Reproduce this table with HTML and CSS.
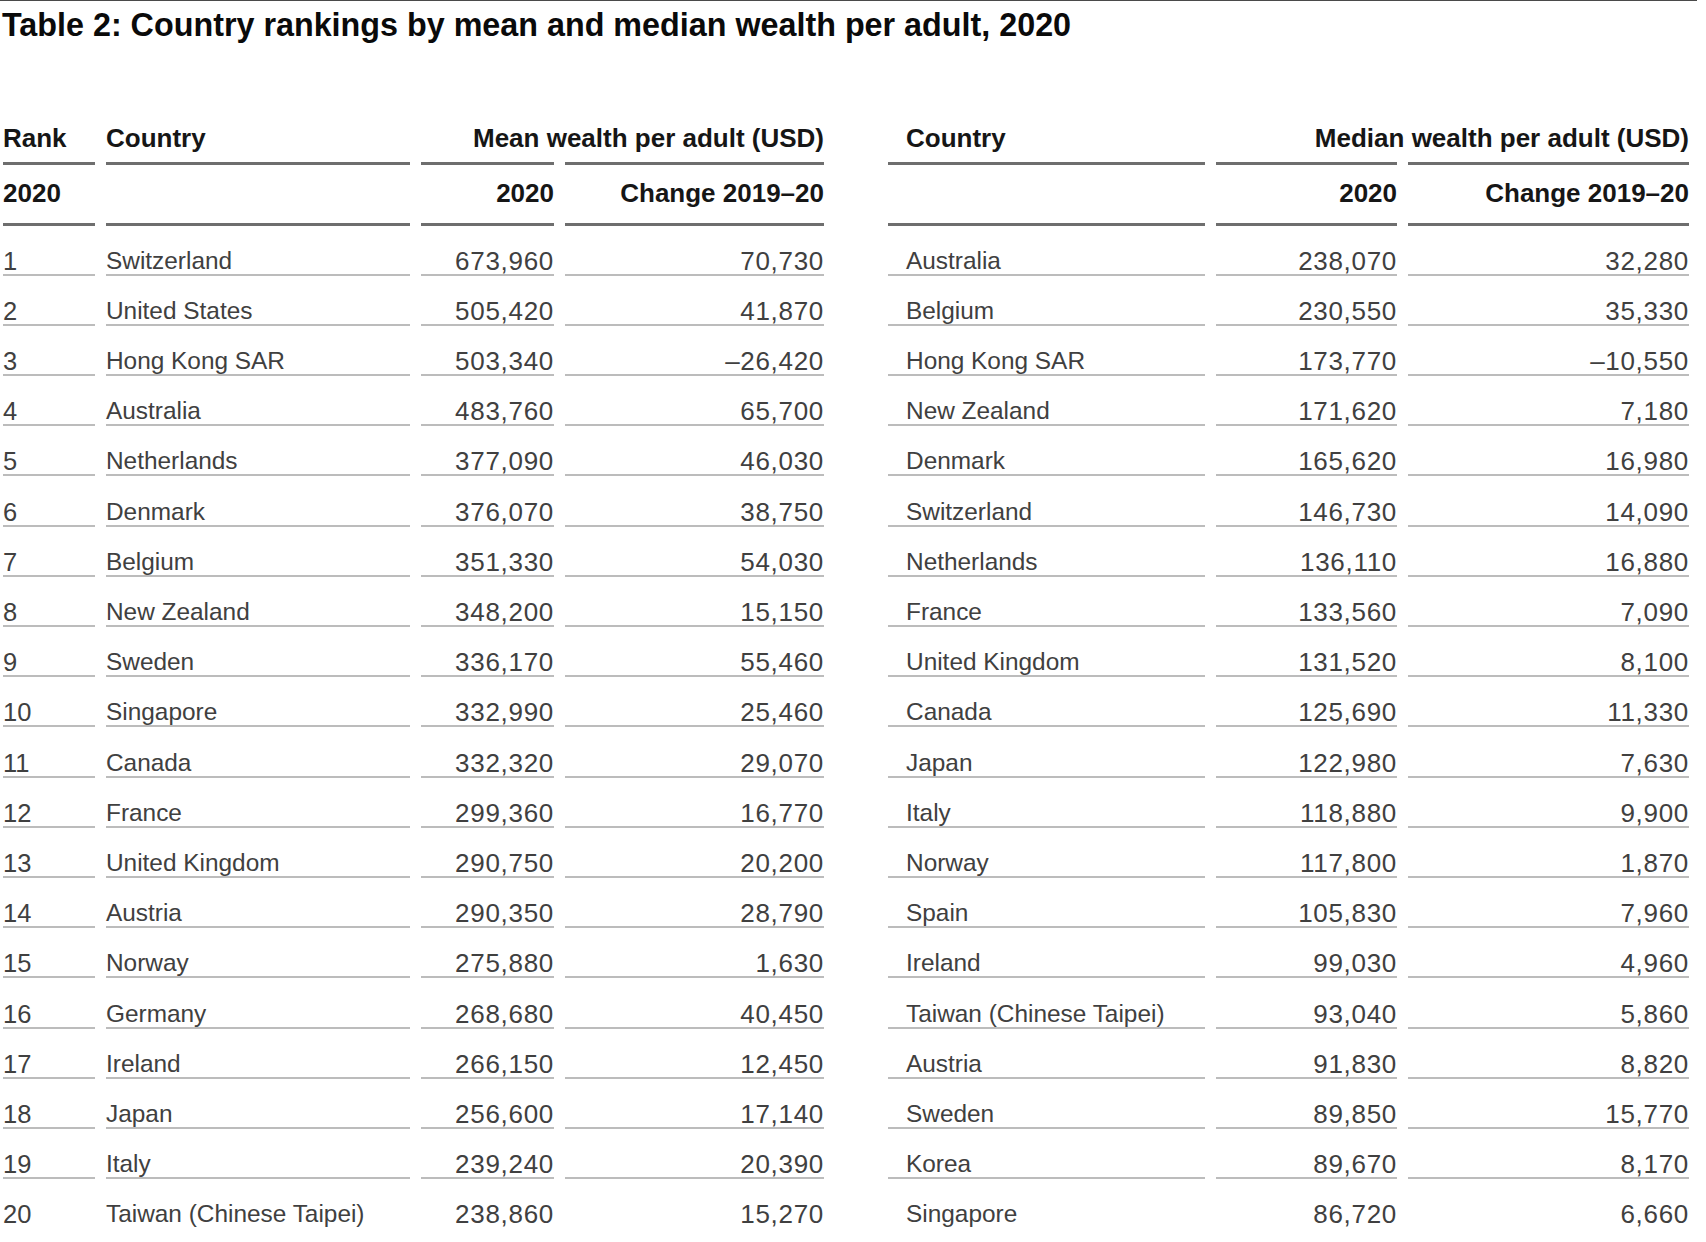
FILE: index.html
```html
<!DOCTYPE html>
<html lang="en">
<head>
<meta charset="utf-8">
<title>Table 2: Country rankings by mean and median wealth per adult, 2020</title>
<link rel="stylesheet" href="styles.css">
</head>
<body>
<div class="page">
  <h1 class="title">Table 2: Country rankings by mean and median wealth per adult, 2020</h1>
  <div class="tables">
    <table class="wt wt-mean">
      <colgroup><col class="c-rank"><col class="c-country"><col class="c-m2020"><col class="c-mchg"></colgroup>
      <thead>
        <tr class="hr1">
          <th class="left">Rank</th>
          <th class="left">Country</th>
          <th class="num span-mean" colspan="2">Mean wealth per adult (USD)</th>
        </tr>
        <tr class="hr2">
          <th class="left">2020</th>
          <th></th>
          <th class="num">2020</th>
          <th class="num">Change 2019–20</th>
        </tr>
      </thead>
      <tbody>
        <tr><td class="rank">1</td><td class="name">Switzerland</td><td class="num">673,960</td><td class="num">70,730</td></tr>
        <tr><td class="rank">2</td><td class="name">United States</td><td class="num">505,420</td><td class="num">41,870</td></tr>
        <tr><td class="rank">3</td><td class="name">Hong Kong SAR</td><td class="num">503,340</td><td class="num">–26,420</td></tr>
        <tr><td class="rank">4</td><td class="name">Australia</td><td class="num">483,760</td><td class="num">65,700</td></tr>
        <tr><td class="rank">5</td><td class="name">Netherlands</td><td class="num">377,090</td><td class="num">46,030</td></tr>
        <tr><td class="rank">6</td><td class="name">Denmark</td><td class="num">376,070</td><td class="num">38,750</td></tr>
        <tr><td class="rank">7</td><td class="name">Belgium</td><td class="num">351,330</td><td class="num">54,030</td></tr>
        <tr><td class="rank">8</td><td class="name">New Zealand</td><td class="num">348,200</td><td class="num">15,150</td></tr>
        <tr><td class="rank">9</td><td class="name">Sweden</td><td class="num">336,170</td><td class="num">55,460</td></tr>
        <tr><td class="rank">10</td><td class="name">Singapore</td><td class="num">332,990</td><td class="num">25,460</td></tr>
        <tr><td class="rank">11</td><td class="name">Canada</td><td class="num">332,320</td><td class="num">29,070</td></tr>
        <tr><td class="rank">12</td><td class="name">France</td><td class="num">299,360</td><td class="num">16,770</td></tr>
        <tr><td class="rank">13</td><td class="name">United Kingdom</td><td class="num">290,750</td><td class="num">20,200</td></tr>
        <tr><td class="rank">14</td><td class="name">Austria</td><td class="num">290,350</td><td class="num">28,790</td></tr>
        <tr><td class="rank">15</td><td class="name">Norway</td><td class="num">275,880</td><td class="num">1,630</td></tr>
        <tr><td class="rank">16</td><td class="name">Germany</td><td class="num">268,680</td><td class="num">40,450</td></tr>
        <tr><td class="rank">17</td><td class="name">Ireland</td><td class="num">266,150</td><td class="num">12,450</td></tr>
        <tr><td class="rank">18</td><td class="name">Japan</td><td class="num">256,600</td><td class="num">17,140</td></tr>
        <tr><td class="rank">19</td><td class="name">Italy</td><td class="num">239,240</td><td class="num">20,390</td></tr>
        <tr><td class="rank">20</td><td class="name">Taiwan (Chinese Taipei)</td><td class="num">238,860</td><td class="num">15,270</td></tr>
      </tbody>
    </table>

    <table class="wt wt-median">
      <colgroup><col class="c-country2"><col class="c-d2020"><col class="c-dchg"></colgroup>
      <thead>
        <tr class="hr1">
          <th class="left indent">Country</th>
          <th class="num span-median" colspan="2">Median wealth per adult (USD)</th>
        </tr>
        <tr class="hr2">
          <th></th>
          <th class="num">2020</th>
          <th class="num">Change 2019–20</th>
        </tr>
      </thead>
      <tbody>
        <tr><td class="name indent">Australia</td><td class="num">238,070</td><td class="num">32,280</td></tr>
        <tr><td class="name indent">Belgium</td><td class="num">230,550</td><td class="num">35,330</td></tr>
        <tr><td class="name indent">Hong Kong SAR</td><td class="num">173,770</td><td class="num">–10,550</td></tr>
        <tr><td class="name indent">New Zealand</td><td class="num">171,620</td><td class="num">7,180</td></tr>
        <tr><td class="name indent">Denmark</td><td class="num">165,620</td><td class="num">16,980</td></tr>
        <tr><td class="name indent">Switzerland</td><td class="num">146,730</td><td class="num">14,090</td></tr>
        <tr><td class="name indent">Netherlands</td><td class="num">136,110</td><td class="num">16,880</td></tr>
        <tr><td class="name indent">France</td><td class="num">133,560</td><td class="num">7,090</td></tr>
        <tr><td class="name indent">United Kingdom</td><td class="num">131,520</td><td class="num">8,100</td></tr>
        <tr><td class="name indent">Canada</td><td class="num">125,690</td><td class="num">11,330</td></tr>
        <tr><td class="name indent">Japan</td><td class="num">122,980</td><td class="num">7,630</td></tr>
        <tr><td class="name indent">Italy</td><td class="num">118,880</td><td class="num">9,900</td></tr>
        <tr><td class="name indent">Norway</td><td class="num">117,800</td><td class="num">1,870</td></tr>
        <tr><td class="name indent">Spain</td><td class="num">105,830</td><td class="num">7,960</td></tr>
        <tr><td class="name indent">Ireland</td><td class="num">99,030</td><td class="num">4,960</td></tr>
        <tr><td class="name indent">Taiwan (Chinese Taipei)</td><td class="num">93,040</td><td class="num">5,860</td></tr>
        <tr><td class="name indent">Austria</td><td class="num">91,830</td><td class="num">8,820</td></tr>
        <tr><td class="name indent">Sweden</td><td class="num">89,850</td><td class="num">15,770</td></tr>
        <tr><td class="name indent">Korea</td><td class="num">89,670</td><td class="num">8,170</td></tr>
        <tr><td class="name indent">Singapore</td><td class="num">86,720</td><td class="num">6,660</td></tr>
      </tbody>
    </table>
  </div>
</div>
</body>
</html>
```

FILE: styles.css
```css
:root {
  --thick: #6e6e6e;
  --thin: #bcbcbc;
  --gap: 11px;
}

html, body {
  margin: 0;
  padding: 0;
  background: #ffffff;
}

body {
  font-family: "Liberation Sans", Arial, Helvetica, sans-serif;
  color: #111;
}

.page {
  width: 1697px;
  border-top: 1px solid #4a4a4a;
}

.title {
  margin: 6px 0 80px 2px;
  font-size: 32.3px;
  line-height: 37px;
  font-weight: 700;
  color: #0a0a0a;
}

.tables {
  display: flex;
  align-items: flex-start;
  gap: 42px;
  margin-left: -8px;
}

.wt {
  border-collapse: separate;
  border-spacing: var(--gap) 0;
  table-layout: fixed;
}

.wt-mean { width: 843px; }
.wt-median { width: 823px; }

.c-rank { width: 92px; }
.c-country { width: 304px; }
.c-m2020 { width: 133px; }
.c-mchg { width: 259px; }

.c-country2 { width: 317px; }
.c-d2020 { width: 181px; }
.c-dchg { width: 281px; }

.wt th,
.wt td {
  padding: 0;
  white-space: nowrap;
  vertical-align: bottom;
  line-height: 26px;
}

.wt th {
  font-size: 26px;
  font-weight: 700;
  color: #161616;
  text-align: left;
}

.wt td {
  font-size: 25.5px;
  font-weight: 400;
  color: #404040;
  padding-top: 22.2px;
  border-bottom: 2px solid var(--thin);
}

.wt td.name {
  font-size: 24.4px;
}

.wt td.num {
  font-size: 26px;
  letter-spacing: 0.7px;
}

.wt td.num {
  padding-right: 0;
}

.wt tbody tr:last-child td {
  border-bottom-color: transparent;
}

.wt .num {
  text-align: right;
}

.wt .left {
  text-align: left;
}

.wt .indent {
  padding-left: 18px;
}

.hr1 th {
  padding-top: 1px;
  padding-bottom: 10.5px;
  border-bottom: 3px solid var(--thick);
}

.hr2 th {
  padding-top: 15.5px;
  padding-bottom: 16.5px;
  border-bottom: 3px solid var(--thick);
}

/* spanning header: underline is drawn per column, with the column gap left open */
.hr1 .span-mean,
.hr1 .span-median {
  border-bottom: 3px solid transparent;
  background-repeat: no-repeat;
  background-position: left bottom;
  background-size: 100% 3px;
  background-origin: border-box;
  background-clip: border-box;
}

.hr1 .span-mean {
  background-image: linear-gradient(to right,
    var(--thick) 0 133px,
    transparent 133px 144px,
    var(--thick) 144px 100%);
}

.hr1 .span-median {
  background-image: linear-gradient(to right,
    var(--thick) 0 181px,
    transparent 181px 192px,
    var(--thick) 192px 100%);
}
```
